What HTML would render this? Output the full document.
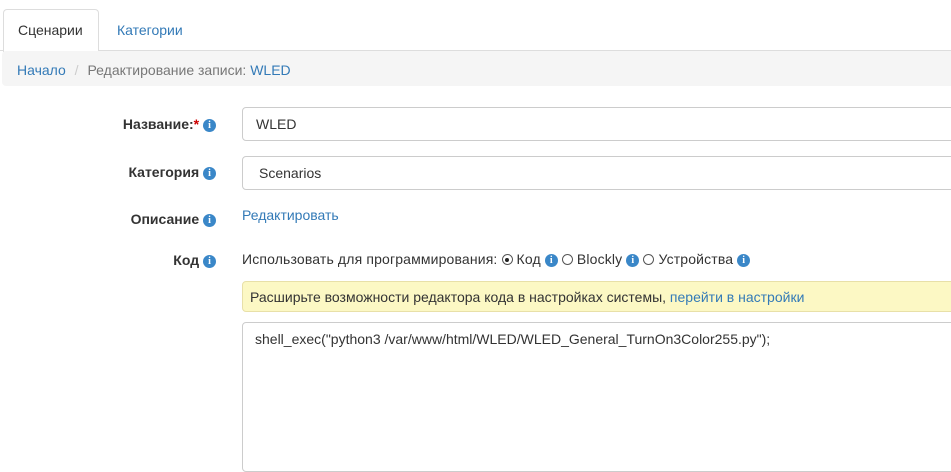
<!DOCTYPE html>
<html><head><meta charset="utf-8"><style>
body{margin:0;width:951px;height:456px;overflow:hidden;background:#fff;font-family:"Liberation Sans",Arial,sans-serif;font-size:14px;color:#333;position:relative}
.a{position:absolute}
.i{display:inline-block;width:13px;height:13px;border-radius:50%;background:#3a87c8;color:#fff;font-size:10px;font-weight:bold;text-align:center;line-height:13px;font-family:"Liberation Serif",serif;vertical-align:1px}
.lbl{right:735px;font-weight:bold;white-space:nowrap}
.inp{left:242px;width:720px;border:1px solid #ccc;border-radius:4px;box-sizing:border-box;padding-left:13px}
.r{display:inline-block;width:11px;height:11px;border:1px solid #555;border-radius:50%;box-sizing:border-box;vertical-align:-1px;position:relative}
.r.on::after{content:"";position:absolute;left:2.5px;top:2.5px;width:4px;height:4px;border-radius:50%;background:#222}
a{color:#337ab7;text-decoration:none}
</style></head><body>
<div class="a" style="left:0;top:50px;width:951px;border-top:1px solid #ddd"></div>
<div class="a" style="left:3px;top:9px;width:94px;height:42px;border:1px solid #ddd;border-bottom:none;border-radius:4px 4px 0 0;background:#fff"></div>
<div class="a" style="left:18px;top:22px">Сценарии</div>
<div class="a" style="left:117px;top:22px;color:#337ab7">Категории</div>
<div class="a" style="left:2px;top:51px;width:960px;height:35px;background:#f5f5f5;border-radius:4px"></div>
<div class="a" style="left:17px;top:62px"><a>Начало</a> <span style="color:#ccc;padding:0 5px">/</span> <span style="color:#777">Редактирование записи: </span><a>WLED</a></div>
<div class="a lbl" style="top:116px">Название:<span style="color:#c00">*</span> <span class="i">i</span></div>
<div class="a inp" style="top:107px;height:34px;line-height:32px">WLED</div>
<div class="a lbl" style="top:164px">Категория <span class="i">i</span></div>
<div class="a inp" style="top:156px;height:34px;line-height:32px;padding-left:16px">Scenarios</div>
<div class="a lbl" style="top:211px">Описание <span class="i">i</span></div>
<div class="a" style="left:242px;top:207px"><a>Редактировать</a></div>
<div class="a lbl" style="top:252px">Код <span class="i">i</span></div>
<div class="a" style="left:242px;top:251px;white-space:nowrap;letter-spacing:0.15px">Использовать для программирования: <span class="r on"></span> Код <span class="i">i</span> <span class="r"></span> Blockly <span class="i">i</span> <span class="r"></span> Устройства <span class="i">i</span></div>
<div class="a" style="left:242px;top:281px;width:720px;height:31px;box-sizing:border-box;background:#fcf8c4;border:1px solid #e8e0a8;border-radius:4px;padding:7px 0 0 7px">Расширьте возможности редактора кода в настройках системы, <a>перейти в настройки</a></div>
<div class="a inp" style="top:322px;height:150px;padding:8px 0 0 12px">shell_exec("python3 /var/www/html/WLED/WLED_General_TurnOn3Color255.py");</div>
</body></html>
